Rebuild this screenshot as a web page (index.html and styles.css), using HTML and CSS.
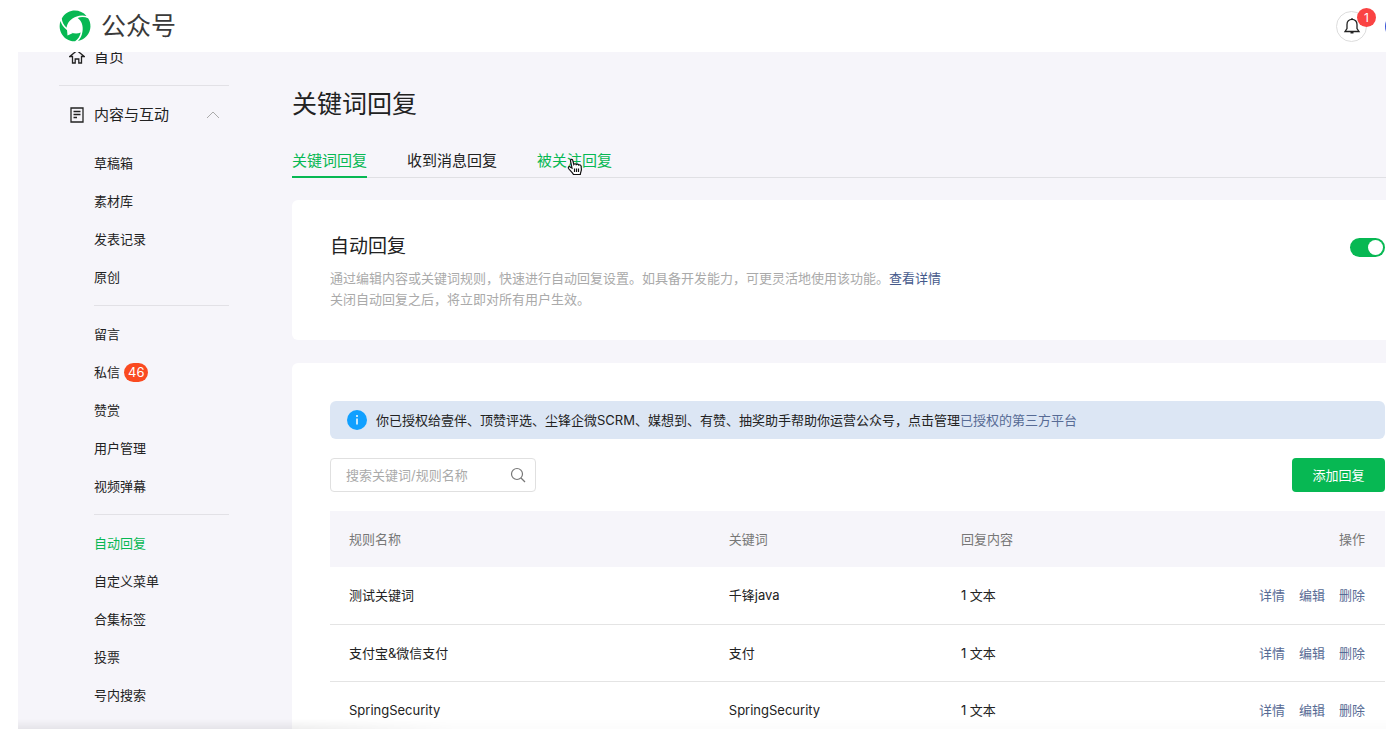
FILE: index.html
```html
<!DOCTYPE html>
<html lang="zh-CN">
<head>
<meta charset="utf-8">
<title>公众号</title>
<link rel="stylesheet" href="styles.css">
</head>
<body>
<div class="app">
  <header class="topbar">
    <a class="brand" href="#">
      <svg class="brand-logo" viewBox="0 0 32 32" aria-hidden="true">
        <path d="M27.500 6C23 .500 15 -1 9 2.200C6 3.800 4 6 2.800 8.500C3 12 4.800 15.500 7.600 17.700C8 13 12 8.500 17 6.800C20.500 5.300 24 5 27.500 6Z"/>
        <path transform="rotate(120 16 16)" d="M27.500 6C23 .500 15 -1 9 2.200C6 3.800 4 6 2.800 8.500C3 12 4.800 15.500 7.600 17.700C8 13 12 8.500 17 6.800C20.500 5.300 24 5 27.500 6Z"/>
        <path transform="rotate(240 16 16)" d="M27.500 6C23 .500 15 -1 9 2.200C6 3.800 4 6 2.800 8.500C3 12 4.800 15.500 7.600 17.700C8 13 12 8.500 17 6.800C20.500 5.300 24 5 27.500 6Z"/>
        <path class="tail" d="M8 19.500L8.500 25.500L14 23Z"/>
      </svg>
      <span>公众号</span>
    </a>
    <div class="account">
      <button class="bell" type="button" aria-label="通知">
        <svg viewBox="0 0 20 20" aria-hidden="true"><path d="M3 15.500H17L15 12.500V8.500C15 5.500 13 3.300 10 3.300S5 5.500 5 8.500V12.500ZM10 3.300V2M8.500 16.800H11.500"/></svg>
        <span class="bell-count">1</span>
      </button>
      <span class="avatar"></span>
    </div>
  </header>
  <div class="body">
    <nav class="sidebar">
      <a class="section home" href="#">
        <svg viewBox="0 0 16 16" aria-hidden="true"><path d="M3.500 7.500H.800L8 1.500L15.200 7.500H12.500V14H9.800V10H6.200V14H3.500Z"/></svg>
        <span>首页</span>
      </a>
      <button class="section content" type="button">
        <svg viewBox="0 0 16 16" aria-hidden="true"><path d="M2 1H14V15H2ZM4.500 4.500H11.500M4.500 7.500H11.500M4.500 10.500H8"/></svg>
        <span>内容与互动</span>
        <svg class="chevron" viewBox="0 0 14 14" aria-hidden="true"><path d="M1 10L7 4L13 10"/></svg>
      </button>
      <ul class="menu">
        <li><a href="#">草稿箱</a></li>
        <li><a href="#">素材库</a></li>
        <li><a href="#">发表记录</a></li>
        <li><a href="#">原创</a></li>
      </ul>
      <ul class="menu">
        <li><a href="#">留言</a></li>
        <li><a href="#">私信<span class="count">46</span></a></li>
        <li><a href="#">赞赏</a></li>
        <li><a href="#">用户管理</a></li>
        <li><a href="#">视频弹幕</a></li>
      </ul>
      <ul class="menu">
        <li><a class="current" href="#">自动回复</a></li>
        <li><a href="#">自定义菜单</a></li>
        <li><a href="#">合集标签</a></li>
        <li><a href="#">投票</a></li>
        <li><a href="#">号内搜索</a></li>
      </ul>
    </nav>
    <main class="main">
      <h1>关键词回复</h1>
      <div class="tabs">
        <a class="tab active" href="#">关键词回复</a>
        <a class="tab" href="#">收到消息回复</a>
        <a class="tab hover" href="#">被关注回复
          <svg class="pointer" viewBox="0 0 16 18" aria-hidden="true"><path d="M5 10L3.500 2.800C3.300 1.200 5.200.800 5.700 2.200L6.800 6.500C7.500 5.500 8.800 5.500 9.200 6.600C10 5.700 11.400 6 11.700 7.100C12.700 6.400 14 7 14.100 8.200L14.400 11.500C14.400 13.200 13.500 14 13.300 16.500H6.500C5.500 14.500 3 12.500 1.500 10.500C.800 9 2.500 8 3.500 9.200Z"/><path d="M7.500 10.500V14M9.500 10.500V14M11.500 10.500V14"/></svg>
        </a>
      </div>
      <section class="card switch-card">
        <div class="intro">
          <h2 id="auto-reply">自动回复</h2>
          <p>通过编辑内容或关键词规则&#xFF0C;快速进行自动回复设置。如具备开发能力&#xFF0C;可更灵活地使用该功能。<a href="#">查看详情</a></p>
          <p>关闭自动回复之后&#xFF0C;将立即对所有用户生效。</p>
        </div>
        <input class="switch" type="checkbox" role="switch" aria-labelledby="auto-reply" checked>
      </section>
      <section class="card rules-card">
        <div class="notice">
          <svg viewBox="0 0 20 20" aria-hidden="true"><circle cx="10" cy="10" r="10"/><path d="M10 8.500V14.500M10 5V7"/></svg>
          <p>你已授权给壹伴、顶赞评选、尘锋企微SCRM、媒想到、有赞、抽奖助手帮助你运营公众号&#xFF0C;点击管理<a href="#">已授权的第三方平台</a></p>
        </div>
        <div class="tools">
          <label class="search">
            <input type="text" placeholder="搜索关键词/规则名称" aria-label="搜索关键词/规则名称">
            <svg viewBox="0 0 16 16" aria-hidden="true"><circle cx="7" cy="7" r="5.500"/><path d="M11 11L15 15"/></svg>
          </label>
          <button class="add" type="button">添加回复</button>
        </div>
        <table class="rules">
          <thead>
            <tr><th class="col-name">规则名称</th><th class="col-key">关键词</th><th class="col-reply">回复内容</th><th class="col-ops">操作</th></tr>
          </thead>
          <tbody>
            <tr><td>测试关键词</td><td>千锋java</td><td>1 文本</td><td class="col-ops"><div class="ops"><a href="#">详情</a><a href="#">编辑</a><a href="#">删除</a></div></td></tr>
            <tr><td>支付宝&amp;微信支付</td><td>支付</td><td>1 文本</td><td class="col-ops"><div class="ops"><a href="#">详情</a><a href="#">编辑</a><a href="#">删除</a></div></td></tr>
            <tr><td>SpringSecurity</td><td>SpringSecurity</td><td>1 文本</td><td class="col-ops"><div class="ops"><a href="#">详情</a><a href="#">编辑</a><a href="#">删除</a></div></td></tr>
          </tbody>
        </table>
      </section>
    </main>
  </div>
</div>
</body>
</html>
```
FILE: styles.css
```css
* { box-sizing: border-box; }
body {
  margin: 0;
  height: 100vh;
  padding: 0 11px 7px 18px;
  background: #fff;
  color: #222;
  font: 13px/20px Inter, "Noto Sans CJK SC", sans-serif;
}
a { color: inherit; text-decoration: none; }
h1, h2, p, ul { margin: 0; padding: 0; font-weight: 400; }
ul { list-style: none; }
button, input { font: inherit; color: inherit; }
button { border: 0; padding: 0; background: none; cursor: pointer; }
svg { flex: none; fill: none; }

.app { display: flex; flex-direction: column; height: 100%; overflow: hidden; }

.topbar {
  flex: none;
  display: flex;
  justify-content: space-between;
  align-items: center;
  height: 52px;
  padding-left: 41px;
  overflow: hidden;
}
.brand { display: flex; align-items: center; gap: 10px; font-size: 25px; line-height: 32px; color: #3a3a3a; }
.brand-logo { width: 32px; height: 32px; fill: #07b853; }
.brand-logo .tail { fill: #fff; }
.account { display: flex; align-items: center; gap: 18px; }
.bell {
  position: relative;
  display: grid;
  place-items: center;
  width: 31px;
  height: 31px;
  border: 1px solid #ddd;
  border-radius: 50%;
}
.bell svg { width: 20px; height: 20px; stroke: #222; stroke-width: 1.3; }
.bell-count {
  position: absolute;
  top: -4px;
  right: -10px;
  width: 19px;
  border-radius: 10px;
  background: #fa4343;
  color: #fff;
  font-size: 12px;
  line-height: 19px;
}
.avatar { width: 31px; height: 31px; margin-right: -30px; border-radius: 50%; background: #3b56d8; }

.body {
  position: relative;
  flex: 1;
  min-height: 0;
  display: flex;
  overflow: hidden;
  background: #f6f5fa;
}
.body::after {
  content: "";
  position: absolute;
  inset: auto 0 0 0;
  height: 10px;
  background: linear-gradient(#0000, #0001);
  -webkit-mask: linear-gradient(90deg, #000 20%, #0003 32%);
  mask: linear-gradient(90deg, #000 20%, #0003 32%);
  pointer-events: none;
}

.sidebar { flex: none; width: 274px; padding: 0 63px 0 41px; }
.section { display: flex; align-items: center; gap: 9px; width: 100%; padding: 0 9px 0 10px; font-size: 15px; line-height: 22px; text-align: left; }
.section svg { width: 16px; height: 16px; stroke: #222; stroke-width: 1.3; }
.section .chevron { width: 14px; height: 14px; margin-left: auto; stroke: #aaa; stroke-width: 1; }
.home { margin-top: -6px; padding-bottom: 17px; border-bottom: 1px solid #e2e1e6; }
.content { height: 58px; }
.menu { margin-left: 35px; line-height: 38px; }
.menu + .menu { margin-top: 9px; padding-top: 9px; border-top: 1px solid #e2e1e6; }
.menu a { display: flex; align-items: center; gap: 4px; }
.menu .current { color: #07b853; }
.count { padding: 0 4px; border-radius: 10px; background: #fa4a20; color: #fff; line-height: 19px; }

.main { flex: 1; min-width: 0; padding-top: 34px; }
h1 { font-size: 25px; line-height: 36px; }
.tabs { display: flex; gap: 40px; margin-top: 29px; border-bottom: 1px solid #e0e0e4; font-size: 15px; line-height: 20px; }
.tab { position: relative; padding-bottom: 5px; margin-bottom: -1px; border-bottom: 2px solid transparent; }
.tab.active { border-color: #07b853; }
.tab.active, .tab.hover { color: #07b853; }
.pointer { position: absolute; left: 30px; top: 7px; width: 16px; height: 18px; stroke: #111; stroke-width: 1.2; fill: #fff; }

.card { background: #fff; border-radius: 6px 0 0 6px; padding-left: 38px; padding-right: 1px; }
.switch-card { display: flex; align-items: flex-start; justify-content: space-between; margin-top: 22px; padding-top: 33px; padding-bottom: 30px; color: #aaa; line-height: 21px; }
h2 { margin-bottom: 7px; color: #222; font-size: 19px; line-height: 28px; }
.intro a, .notice a, .ops a { color: #576b95; }
.intro a { color: #45598b; }
.switch { appearance: none; flex: none; display: flex; width: 35px; height: 19px; margin: 5px 0 0; padding: 2px; border-radius: 10px; background: #07b853; }
.switch::before { content: ""; width: 15px; height: 15px; margin-left: auto; border-radius: 50%; background: #fff; }

.rules-card { margin-top: 23px; padding-top: 38px; padding-bottom: 40px; }
.notice { display: flex; align-items: center; gap: 9px; padding: 9px 17px; border-radius: 6px; background: #dce6f4; }
.notice svg { width: 20px; height: 20px; fill: #10a0ff; }
.notice path { stroke: #fff; stroke-width: 1.5; }
.tools { display: flex; justify-content: space-between; margin: 19px 0; }
.search { display: flex; align-items: center; width: 206px; height: 34px; padding: 0 9px 0 15px; border: 1px solid #e0e0e0; border-radius: 4px; }
.search input { flex: 1; min-width: 0; padding: 0; border: 0; outline: 0; background: none; }
.search input::placeholder { color: #aaa; }
.search svg { width: 16px; height: 16px; stroke: #777; stroke-width: 1.2; }
.add { width: 93px; height: 34px; border-radius: 4px; background: #07b853; color: #fff; }

.rules { width: 100%; table-layout: fixed; border-collapse: collapse; text-align: left; }
.rules th, .rules td { padding: 0 20px 0 19px; }
.rules th { height: 56px; background: #f6f5fa; color: #777; font-weight: 400; }
.rules td { height: 57px; border-bottom: 1px solid #e4e4e4; }
.col-name { width: 36%; }
.col-key { width: 22%; }
.col-reply { width: 20%; }
.rules .col-ops { text-align: right; }
.ops { display: flex; justify-content: flex-end; gap: 14px; }
```
